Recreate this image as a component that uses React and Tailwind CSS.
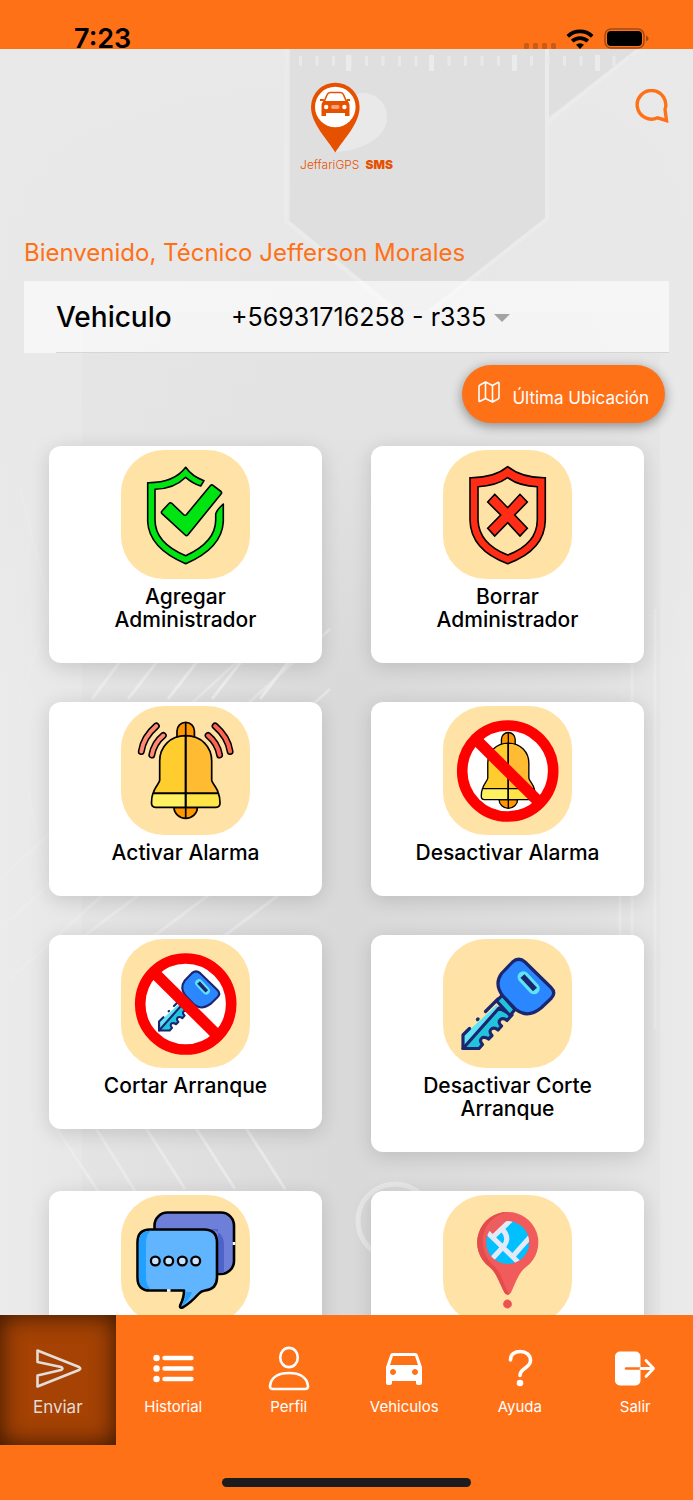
import React from 'react';

const StatusBar = () => (
  <div className="relative z-10 flex h-[49px] shrink-0 items-end justify-between bg-[#ff7117] pr-11 pl-[74px]">
    <span className="h-6 text-[27px] leading-7 font-semibold text-black">7:23</span>
    <div className="flex items-end gap-2.5">
      <svg className="h-[6px] w-8" viewBox="0 0 32 6" fill="#c95c14">
        <rect x="0" y="0" width="5" height="6" rx="1.5" />
        <rect x="9" y="0" width="5" height="6" rx="1.5" />
        <rect x="18" y="0" width="5" height="6" rx="1.5" />
        <rect x="27" y="0" width="5" height="6" rx="1.5" />
      </svg>
      <svg className="h-5 w-7" viewBox="0 0 28 20" fill="none" stroke="#000" strokeWidth="3.8">
        <path d="M1.8 7.4a17.5 17.5 0 0 1 24.4 0" />
        <path d="M6.2 12.2a11.2 11.2 0 0 1 15.6 0" />
        <path d="M14 20l-4-4.2a5.8 5.8 0 0 1 8 0z" fill="#000" stroke="none" />
      </svg>
      <svg className="h-[21px] w-[45px]" viewBox="0 0 45 21">
        <rect x="1" y="1" width="39" height="19" rx="6" fill="none" stroke="#a44a10" strokeWidth="1.5" />
        <rect x="3" y="3" width="35" height="15" rx="4" />
        <path d="M42 7.5q2.6.8 2.6 3t-2.6 3z" fill="#a44a10" />
      </svg>
    </div>
  </div>
);

const Backdrop = () => (
  <svg
    className="pointer-events-none absolute inset-0 -z-10 h-full w-full"
    viewBox="0 0 693 1266"
    preserveAspectRatio="xMidYMin slice"
    aria-hidden="true"
  >
    <defs>
      <linearGradient id="floor" x1="0" x2="1" y1="0" y2="0">
        <stop offset="0" stopColor="#ebebeb" />
        <stop offset="0.15" stopColor="#e6e6e6" />
        <stop offset="0.5" stopColor="#dcdcdc" />
        <stop offset="0.85" stopColor="#e3e3e3" />
        <stop offset="1" stopColor="#ebebeb" />
      </linearGradient>
      <linearGradient id="top" x1="0" x2="0" y1="0" y2="1">
        <stop offset="0" stopColor="#e9e9e9" />
        <stop offset="0.6" stopColor="#e8e8e8" stopOpacity="0.8" />
        <stop offset="1" stopColor="#e6e6e6" stopOpacity="0" />
      </linearGradient>
    </defs>
    <rect width="693" height="1266" fill="url(#floor)" />
    <rect width="693" height="640" fill="url(#top)" />
    <path d="M290 0H545V170L430 262H400L290 172Z" fill="#dfdfdf" />
    <path d="M549 0H636L549 68Z" fill="#dfdfdf" />
    <path d="M286 0V172L395 262M547 0V170L430 262" fill="none" stroke="#ebebeb" strokeWidth="4" />
    <path d="M640 0L549 72" fill="none" stroke="#ececec" strokeWidth="3" />
    <path d="M200 12H640" stroke="#e9e9e9" strokeWidth="10" strokeDasharray="3 13.5" />
    <path d="M346 14H620" stroke="#ebebeb" strokeWidth="16" strokeDasharray="5 78" />
    <path d="M82 262H660V1266H82Z" fill="#000" fillOpacity="0.012" />
    <g fill="none" stroke="#ececec" strokeWidth="3">
      <path d="M92 650l60-80M128 650l70-90M168 650l70-90M212 650l70-90M260 650l40-52" />
      <path d="M0 880l330-300M0 830l240-220M10 930l320-290" strokeOpacity="0.6" />
      <path d="M80 890l80-60M150 890l80-60M220 890l80-60" strokeOpacity="0.6" />
      <path d="M50 1070l60 90M90 1070l50 80M140 1070l45 70M190 1070l45 70M240 1070l45 70" strokeOpacity="0.8" />
      <path d="M632 560v420M620 730v300M655 560v420" strokeOpacity="0.6" />
      <path d="M20 440l30 120-40 120M20 700l30 150" strokeOpacity="0.5" />
      <circle cx="395" cy="1172" r="37" strokeWidth="5" strokeOpacity="0.7" />
    </g>
  </svg>
);

const Logo = () => (
  <div className="flex flex-col items-center">
    <svg className="h-[72px] w-[92px]" viewBox="1 0 92 72" role="img" aria-label="JeffariGPS">
      <path d="M36 70C50 50 52 11 60 11c15-1 27 9 27 24C87 54 66 68 36 70Z" fill="#e9e9e9" />
      <path d="M35.3 70.5C28 58 11 42 11 25a24.300 24.300 0 0 1 48.600 0C59.600 42 43 58 35.300 70.500Z" fill="#e65100" />
      <circle cx="35.300" cy="25" r="20.300" fill="#fff" />
      <path d="M24 20l3.200-7.500q.8-2 3-2h10.200q2.200 0 3 2L46.600 20" fill="none" stroke="#e65100" strokeWidth="1.600" />
      <path d="M20 17h3.500l1.500 2h20.600l1.500-2h3v2h-2.500q1.900 2 1.900 4v11h-4.500v-3h-19v3h-4.500V23q0-2 1.900-4H20Z" fill="#e65100" />
      <circle cx="26.200" cy="25" r="2.200" fill="#fff" />
      <circle cx="44.400" cy="25" r="2.200" fill="#fff" />
      <rect x="31" y="23" width="8.600" height="4" rx="2" fill="#f3a27c" />
    </svg>
    <p className="flex gap-1.5 pt-[3px] text-[12px] leading-4 whitespace-nowrap text-[#e65100]">
      <span className="font-light">JeffariGPS</span>
      <span className="font-black">SMS</span>
    </p>
  </div>
);

const AddAdminIcon = () => (
  <g fill="#00e512" stroke="#000" strokeWidth="1.6" strokeLinejoin="round">
    <path d="M64.700 17.300Q71 26.500 83 30.700L79.700 36Q71 33 64.700 27.300Q53 39 34 39.300V70Q34 93 64.700 105.700Q94.700 92 94.700 70V64Q95.500 60 102.300 54V71.700Q101 98 64.700 113.700Q28 98 26.700 71.700V32.700Q53 33 64.700 17.300Z" />
    <path d="M41 61L48 53.500Q49.300 52 51 53.500L62.500 64.500Q64 66 65.500 64.500L89.500 35.500Q90.700 34.300 92 35.300L100 41.500Q101.200 42.700 100 44L67 84.800Q65.700 86.500 64.200 85L41 63.600Q39.700 62.300 41 61Z" />
  </g>
);

const RemoveAdminIcon = () => (
  <g stroke="#000" strokeWidth="1.600" fill="#ff2d16">
    <path
      fillRule="evenodd"
      d="M64.700 16.700Q79 28 102.300 27.700V70Q102 100 64.700 113.700Q27.500 100 27 70V27.700Q51 28 64.700 16.700ZM64.700 27.700Q53 36 35 36.700V70Q36 94 64.700 105Q94 94 94.300 70V36.700Q76 36 64.700 27.700Z"
    />
    <path d="M51.700 44.300L64.700 57.700 77 44.300 84.300 52 71.700 65 84.300 78.300 77 86 64.700 72.700 51.700 86 44.700 78.300 57.700 65 44.700 52Z" />
  </g>
);

const Bell = () => (
  <g stroke="#000" strokeWidth="1.700" strokeLinejoin="round">
    <path d="M56 31V24a8.700 8.700 0 0 1 17.400 0V31Z" fill="#ff9800" />
    <path d="M53 100.300a11.700 11 0 0 0 23.400 0Z" fill="#ff9800" />
    <path d="M64.700 28.700C49 28.700 38.700 40 38.700 54V73C38.700 76 33 81 32.300 86.300H64.700Z" fill="#ffcd2e" />
    <path d="M64.700 28.700C80.400 28.700 90.700 40 90.700 54V73C90.700 76 96.500 81 97.300 86.300H64.700Z" fill="#ffbc32" />
    <path d="M32 86.300H64.700V100.300H34.500Q30.500 100.300 30.500 96Q30.500 90 32 86.300Z" fill="#fff161" />
    <path d="M97.400 86.300H64.700V100.300H95Q99 100.300 99 96Q99 90 97.400 86.300Z" fill="#ffe448" />
    <path d="M64.700 15.500V111.500" />
  </g>
);

const wavesLeft = 'M35.300 19Q22.500 30 20.300 44.500M42.300 28.500Q33 36 30.800 48';
const wavesRight = 'M94.100 19Q106.900 30 109.100 44.500M87.100 28.500Q96.400 36 98.600 48';

const AlarmOnIcon = () => (
  <g transform="translate(0 1)">
    <g fill="none" strokeLinecap="round">
      <path d={wavesLeft} stroke="#000" strokeWidth="7" />
      <path d={wavesLeft} stroke="#ff8a73" strokeWidth="4" />
      <path d={wavesRight} stroke="#000" strokeWidth="7" />
      <path d={wavesRight} stroke="#ff6452" strokeWidth="4" />
    </g>
    <Bell />
  </g>
);

const Forbidden = ({ children }) => (
  <g transform="translate(0 1)">
    <circle cx="64.700" cy="64" r="44" fill="#fff" />
    {children}
    <circle cx="64.700" cy="64" r="45.500" fill="none" stroke="#f00" strokeWidth="10.600" />
    <path d="M33 32.500L96.500 95.500" stroke="#f00" strokeWidth="11.500" />
  </g>
);

const AlarmOffIcon = () => (
  <Forbidden>
    <g transform="translate(14.200 13.400) scale(0.790)">
      <Bell />
    </g>
  </Forbidden>
);

const KeyIcon = () => (
  <g stroke="#1b2670" strokeWidth="3.200" strokeLinejoin="round" strokeLinecap="round">
    <path d="M53.700 66L20 97V109L56 70Z" fill="#5fe3f5" stroke="none" />
    <path d="M56 69L20 109.500H36L39.500 105.500Q35.500 101 39.500 98.500 43 98 45.500 100L49 96.500Q45 92 49 89.500 52 88.500 55 91L58.500 87Q54 83 58 80 61 79 64 81.500L69 76Z" fill="#22c3dd" />
    <path d="M20 109.500V96L26.500 89.500M34.500 80.500l.5-.5M42.500 72.500L55 60" fill="none" />
    <path d="M59.300 56.200L72 70.500 67 76.500 53.700 62Z" fill="#22c3dd" />
    <path d="M69.500 23Q75.700 17.500 82 23L108 48.500Q113.500 54 108 59.500L98 69Q85 79.500 73.500 71L59.500 56.500Q51 45 58.500 34.500Z" fill="#2a87ff" />
    <path d="M80.300 38L91 49.500" stroke="#5fe3f5" strokeWidth="11.500" />
    <path d="M79.500 37L92 50.500" strokeWidth="5.500" strokeLinecap="butt" />
  </g>
);

const CutStarterIcon = () => (
  <Forbidden>
    <g transform="translate(24.800 17.900) scale(0.663)">
      <KeyIcon />
    </g>
  </Forbidden>
);

const MessagesIcon = () => (
  <g stroke="#000" strokeWidth="2.600" strokeLinejoin="round" strokeLinecap="round">
    <rect x="33.500" y="17.500" width="79.500" height="61.500" rx="13" fill="#6d7fd9" />
    <path d="M88 34Q103 36 103 50V77.700H97V34Z" fill="#4c63c9" stroke="none" />
    <path d="M29 34.500H83Q96 34.500 96 47.500V82.500Q96 94 84 95.500 80 96 77.500 99 69 108.500 61.500 112.500 58 113.500 59.500 109.500 63 103 63 95.500H29Q16.500 95.500 16.500 82.500V47.500Q16.500 34.500 29 34.500Z" fill="#61b5ff" />
    <path d="M30 35.800Q17.800 35.800 17.800 48V82Q17.800 94.200 30 94.200Q25 91 25 82V48Q25 39 30 35.800ZM64.500 97H71Q68 106 61 110.500Q65 103 64.500 97Z" fill="#21a0ff" stroke="none" />
    <path d="M113 47V50" stroke="#fff" strokeLinecap="butt" />
    <path d="M46 95.500H49.500" stroke="#fff" strokeLinecap="butt" />
    <g fill="#c9e4ff" strokeWidth="2.300">
      <circle cx="34.300" cy="66" r="4.400" />
      <circle cx="47.700" cy="66" r="4.400" />
      <circle cx="61.300" cy="66" r="4.400" />
      <circle cx="74.700" cy="66" r="4.400" />
    </g>
  </g>
);

const PinIcon = () => (
  <>
    <defs>
      <clipPath id="map-window">
        <circle cx="64.700" cy="47.500" r="21.500" />
      </clipPath>
    </defs>
    <path d="M64.700 17A30.500 30.500 0 0 1 83 72C76 77 73 87 68 97.500Q64.700 102.500 61.400 97.500C56 87 53 77 46.500 72A30.500 30.500 0 0 1 64.700 17Z" fill="#f15b5b" />
    <path d="M64.700 17A30.500 30.500 0 0 0 46.500 72C53 77 56 87 61.400 97.500Q63 100 66 99C60 88 58 77 51 71C33 55 36 23 64.700 17Z" fill="#e44b4b" />
    <circle cx="64.700" cy="47.500" r="21.500" fill="#00c0ff" />
    <g clipPath="url(#map-window)" fill="none" stroke="#e4e9f7" strokeWidth="5">
      <path d="M43 26H66L48 42Z" fill="#f15b5b" stroke="none" />
      <path d="M42 35L78 70M68 25L50 42M48 65L61 51M88 41L71 60M60 35Q67 43 61 51" />
    </g>
    <circle cx="64.500" cy="109" r="4.400" fill="#ec5252" />
  </>
);

const actions = [
  { id: 'add-admin', label: 'Agregar Administrador', icon: AddAdminIcon },
  { id: 'remove-admin', label: 'Borrar Administrador', icon: RemoveAdminIcon },
  { id: 'alarm-on', label: 'Activar Alarma', icon: AlarmOnIcon },
  { id: 'alarm-off', label: 'Desactivar Alarma', icon: AlarmOffIcon },
  { id: 'cut-starter', label: 'Cortar Arranque', icon: CutStarterIcon },
  { id: 'restore-starter', label: 'Desactivar Corte Arranque', icon: KeyIcon },
  { id: 'messages', icon: MessagesIcon },
  { id: 'location', icon: PinIcon },
];

const ActionCard = ({ id, label, icon: Icon }) => (
  <button
    type="button"
    aria-label={label ? undefined : id}
    className="flex w-full flex-col items-center rounded-xl bg-white px-10 pt-1 pb-8 shadow-[0_4px_20px_rgba(0,0,0,0.14)]"
  >
    <span className="block size-[129px] rounded-[43px] bg-[#ffe2a5]">
      <svg className="size-full" viewBox="0 0 129 129" aria-hidden="true">
        <Icon />
      </svg>
    </span>
    {label && <span className="mt-1.5 text-[21px] leading-[23px] font-medium text-black">{label}</span>}
  </button>
);

const tabs = [
  {
    label: 'Enviar',
    active: true,
    icon: <path d="M3.500 5.500L45 22Q47.500 23.500 45 25L3.500 41.500V30.500L27 25Q30 23.500 27 22L3.500 17Z" strokeWidth="2.600" />,
  },
  {
    label: 'Historial',
    icon: (
      <>
        <path d="M15.500 13H42.500M15.500 23.500H42.500M15.500 34H42.500" strokeWidth="4.400" />
        <path d="M7.500 13h.1M7.500 23.500h.1M7.500 34h.1" strokeWidth="6.400" />
      </>
    ),
  },
  {
    label: 'Perfil',
    icon: (
      <g strokeWidth="2.600">
        <ellipse cx="24" cy="12.500" rx="8.800" ry="9.600" />
        <path d="M5 41C6 32 14 28 24 28S42 32 43 41Q43.200 44 40 44H8Q4.800 44 5 41Z" />
      </g>
    ),
  },
  {
    label: 'Vehiculos',
    icon: (
      <path
        transform="translate(0 -2) scale(2)"
        stroke="none"
        fill="currentColor"
        d="M18.920 6.010C18.720 5.420 18.160 5 17.500 5h-11c-.660 0-1.210.420-1.420 1.010L3 12v8c0 .550.450 1 1 1h1c.550 0 1-.450 1-1v-1h12v1c0 .550.450 1 1 1h1c.550 0 1-.450 1-1v-8l-2.080-5.990zM6.500 16c-.830 0-1.500-.670-1.500-1.500S5.670 13 6.500 13s1.500.670 1.500 1.500S7.330 16 6.500 16zm11 0c-.830 0-1.500-.670-1.500-1.500s.670-1.500 1.500-1.500 1.500.670 1.500 1.500-.670 1.500-1.500 1.500zM5 11l1.500-4.500h11L19 11H5z"
      />
    ),
  },
  {
    label: 'Ayuda',
    icon: (
      <>
        <path d="M14.500 15C14.500 9 19 6.500 24.500 6.500S34.500 10 34.500 15.500C34.500 23 24 23 24 30.500" strokeWidth="3.600" />
        <circle cx="24" cy="38" r="3.300" stroke="none" fill="currentColor" />
      </>
    ),
  },
  {
    label: 'Salir',
    icon: (
      <>
        <rect x="4" y="6.500" width="25.500" height="34" rx="5" stroke="none" fill="currentColor" />
        <path d="M15 23.500H29.500" stroke="#ff7117" strokeWidth="2.400" />
        <path d="M30 23.500H42.500M35 15.500L42.500 23.500 35 31.500" strokeWidth="2.800" />
      </>
    ),
  },
];

const TabBar = () => (
  <footer className="relative z-10 flex h-[185px] shrink-0 flex-col justify-between bg-[#ff7117]">
    <nav className="grid grid-cols-6">
      {tabs.map(({ label, icon, active }) => (
        <a
          key={label}
          href={`#${label.toLowerCase()}`}
          aria-current={active ? 'page' : undefined}
          className={`flex h-[130px] flex-col items-center pt-[30px] ${
            active
              ? 'bg-[#a54204] text-[17px] text-[#e4dcd7] shadow-[inset_0_0_24px_rgba(0,0,0,0.7)]'
              : 'text-[15px] text-white'
          }`}
        >
          <svg
            className="size-12"
            viewBox="0 0 48 48"
            fill="none"
            stroke="currentColor"
            strokeLinecap="round"
            strokeLinejoin="round"
            aria-hidden="true"
          >
            {icon}
          </svg>
          <span className="mt-0.5 leading-6">{label}</span>
        </a>
      ))}
    </nav>
    <div className="mx-auto mb-[13px] h-[9px] w-[36%] rounded-full bg-[#1c1c1c]" />
  </footer>
);

const App = () => (
  <div className="flex h-screen flex-col overflow-hidden bg-[#e6e6e6] font-['Inter','Roboto',sans-serif]">
    <StatusBar />
    <main className="relative isolate min-h-0 flex-1 overflow-y-auto [scrollbar-width:none]">
      <Backdrop />
      <header className="flex px-6 pt-[33px]">
        <div className="flex-1" />
        <Logo />
        <div className="flex flex-1 justify-end">
          <button type="button" aria-label="Mensajes" className="mt-[7px] size-[34px] text-[#ff7117]">
            <svg viewBox="0 0 34 34" fill="none" stroke="currentColor" strokeWidth="3.400">
              <path d="M30 20.500A14.300 14.300 0 1 0 22.500 28.800L31.500 31.500Z" />
            </svg>
          </button>
        </div>
      </header>

      <h1 className="mt-16 px-6 text-[24px] leading-8 text-[#ff7117]">
        Bienvenido, Técnico Jefferson Morales
      </h1>

      <div className="mx-6 mt-3 bg-white/60 pl-8">
        <div className="flex h-[72px] items-center border-b border-[#d6d6d6] text-black">
          <label htmlFor="vehicle" className="w-[175px] text-[28px] font-medium">
            Vehiculo
          </label>
          <div className="flex items-center gap-2 pt-0.5">
            <select id="vehicle" className="appearance-none bg-transparent text-[25px] [field-sizing:content]">
              <option>+56931716258 - r335</option>
            </select>
            <svg className="h-2 w-4" viewBox="0 0 16 8" fill="#a3a3a3">
              <path d="M0 0H16L8 8Z" />
            </svg>
          </div>
        </div>
      </div>

      <div className="mt-3 flex justify-end px-7">
        <button
          type="button"
          className="flex h-[58px] items-center gap-3 rounded-full bg-[#ff7117] px-4 text-white shadow-[0_3px_12px_rgba(0,0,0,0.4)]"
        >
          <svg
            className="mb-1 h-[22px] w-[22px]"
            viewBox="0 0 22 22"
            fill="none"
            stroke="currentColor"
            strokeWidth="1.600"
            strokeLinejoin="round"
          >
            <path d="M1 5.500Q1 4.500 2 4L7.500 1 14.500 4.500 20 1.500Q21 1 21 2.200V16.500Q21 17.500 20 18L14.500 21 7.500 17.500 2 20.300Q1 20.800 1 19.500ZM7.500 1V17.500M14.500 4.500V21" />
          </svg>
          <span className="pt-2 text-[17px] leading-6">Última Ubicación</span>
        </button>
      </div>

      <section className="mt-[23px] grid grid-cols-2 items-start gap-x-[49px] gap-y-[39px] px-[49px] pb-10">
        {actions.map((action) => (
          <ActionCard key={action.id} {...action} />
        ))}
      </section>
    </main>
    <TabBar />
  </div>
);

export default App;
